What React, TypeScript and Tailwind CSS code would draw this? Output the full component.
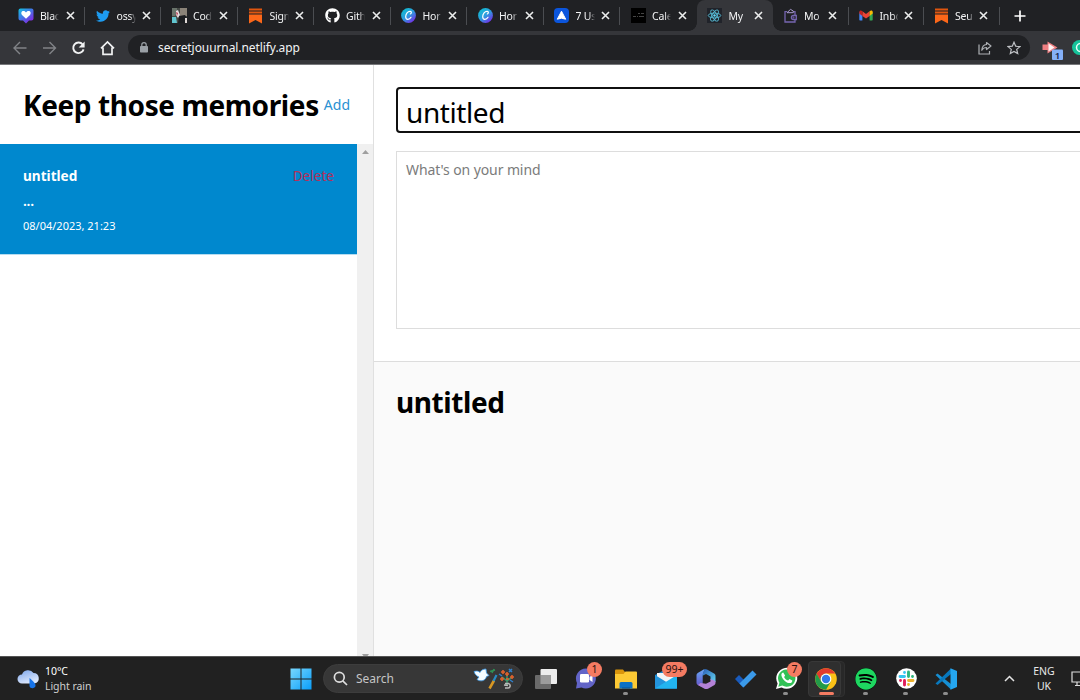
import type { ReactNode } from 'react';
import { FaTwitter, FaGithub, FaSpotify } from 'react-icons/fa';

function HeartIcon() {
  return (
    <svg width="16" height="16" viewBox="0 0 16 16">
      <defs>
        <linearGradient id="heart" x1="0" y1="0" x2="0.8" y2="1">
          <stop offset="0" stopColor="#10c4e0" />
          <stop offset="0.45" stopColor="#3f7be8" />
          <stop offset="1" stopColor="#8a1fe0" />
        </linearGradient>
      </defs>
      <path d="M2.500 0.500h11a2 2 0 0 1 2 2v8a2 2 0 0 1-2 2h-2.500L8 15.500 5 12.500H2.500a2 2 0 0 1-2-2v-8a2 2 0 0 1 2-2z" fill="url(#heart)" />
      <path d="M8 10.800L4 6.900C2.600 5.200 3.500 3 5.400 3 6.700 3 7.500 3.700 8 4.500 8.500 3.700 9.300 3 10.600 3c1.900 0 2.800 2.200 1.400 3.900z" fill="#fff" />
    </svg>
  );
}

function PhotoIcon() {
  return (
    <svg width="15" height="15" viewBox="0 0 15 15">
      <rect width="15" height="15" fill="#454945" />
      <path d="M0 0h5v5L3 8H0z" fill="#69736a" />
      <path d="M8 0h7v8H8z" fill="#8b8378" />
      <path d="M0 9h4l1 6H0z" fill="#61c5d0" />
      <path d="M4 3l2-1 2 5-2 3-2-3z" fill="#e6dcdf" />
      <path d="M4 4l2 1-1 3z" fill="#b83d50" />
      <path d="M7 8l6-1 2 3-1 5H6z" fill="#1b1d20" />
      <path d="M13 10h2v5h-2z" fill="#e0d9d6" />
    </svg>
  );
}

function SubstackIcon() {
  return (
    <svg width="15" height="16" viewBox="0 0 15 16">
      <path d="M1 1.500h13M1 4.500h13" stroke="#e0560f" strokeWidth="2" />
      <path d="M1 6.500h13v9L7.500 12 1 15.500z" fill="#fc6719" />
    </svg>
  );
}

function CanvaIcon({ id }: { id: string }) {
  return (
    <svg width="15" height="15" viewBox="0 0 15 15">
      <defs>
        <linearGradient id={id} x1="0" y1="0" x2="0.8" y2="1">
          <stop offset="0" stopColor="#08c5cd" />
          <stop offset="0.55" stopColor="#2e9bdf" />
          <stop offset="1" stopColor="#7a25e8" />
        </linearGradient>
      </defs>
      <circle cx="7.500" cy="7.500" r="7.400" fill={`url(#${id})`} />
      <path d="M9.300 6c1.300-.5 1.500-2.500 0-2.700C6.800 3 4.700 6 4.700 8.700c0 3.500 3.700 3.300 5.300.6" fill="none" stroke="#fff" strokeWidth="1.200" strokeLinecap="round" />
    </svg>
  );
}

function ArrowheadIcon() {
  return (
    <svg width="15" height="15" viewBox="0 0 15 15">
      <rect width="15" height="15" rx="4" fill="#0b55dc" />
      <path d="M7.500 3.200L11.700 11.200 7.500 10.200 3.300 11.200z" fill="#fff" stroke="#fff" strokeWidth="1" strokeLinejoin="round" />
    </svg>
  );
}

function BlackThumbIcon() {
  return (
    <svg width="15" height="15" viewBox="0 0 15 15">
      <rect width="15" height="15" fill="#000" />
      <path d="M7 5.500h2M10 5.500h3M2 8.500h3M6 8.500h1M8 8.500h5" stroke="#454545" strokeWidth="1" />
    </svg>
  );
}

function ReactIcon() {
  return (
    <svg width="15" height="15" viewBox="0 0 15 15">
      <rect width="15" height="15" fill="#20232a" />
      <g fill="none" stroke="#56b9d2" strokeWidth=".9">
        <ellipse cx="7.500" cy="7.500" rx="6.300" ry="2.400" />
        <ellipse cx="7.500" cy="7.500" rx="6.300" ry="2.400" transform="rotate(60 7.500 7.500)" />
        <ellipse cx="7.500" cy="7.500" rx="6.300" ry="2.400" transform="rotate(120 7.500 7.500)" />
      </g>
      <circle cx="7.500" cy="7.500" r="1.200" fill="#61dafb" />
    </svg>
  );
}

function WalletIcon() {
  return (
    <svg width="13" height="15" viewBox="0 0 13 15" fill="none" stroke="#7565b0" strokeWidth="1.300">
      <path d="M3 3.700H1v10.300h10V11.500M11 7.500V3.700H9.800" />
      <path d="M3 4.700l3.500-3.300L9.300 3v1.700z" stroke="#a99bcf" strokeWidth="1" />
      <path d="M12.300 7.500H9.400a2 2 0 0 0 0 4h2.900z" />
      <circle cx="9.500" cy="9.500" r=".3" />
    </svg>
  );
}

function GmailIcon() {
  return (
    <svg width="14" height="11" viewBox="0 0 14 11">
      <path d="M.3 2v7.500c0 .6.400 1 1 1H3.400V4z" fill="#4285f4" />
      <path d="M13.700 2v7.500c0 .6-.4 1-1 1h-2.100V4z" fill="#34a853" />
      <path d="M3.400 1.200v4.700L7 8.600l3.600-2.700V1.200L7 3.900z" fill="#ea4335" />
      <path d="M.3 2C.3.500 2 0 3.400 1.200v4.700L.3 3.600z" fill="#c5221f" />
      <path d="M13.700 2c0-1.500-1.700-2-3.100-.8v4.700l3.100-2.300z" fill="#fbbc04" />
    </svg>
  );
}

function CloseIcon() {
  return (
    <svg className="shrink-0" width="9" height="9" viewBox="0 0 9 9">
      <path d="M1 1l7 7M8 1L1 8" stroke="#eceded" strokeWidth="1.600" />
    </svg>
  );
}

type TabProps = { icon: ReactNode; title: string; active?: boolean; narrow?: boolean; beforeActive?: boolean };

function Tab({ icon, title, active, narrow, beforeActive }: TabProps) {
  return (
    <div className={`relative flex h-[31px] shrink-0 items-center ${narrow ? 'w-[75.500px] pl-[9px]' : 'w-[76.500px] pl-[10px]'} ${active ? 'rounded-t-[8px] bg-[#35363a]' : ''}`}>
      <div className="flex w-[16px] shrink-0 items-center justify-center">{icon}</div>
      <div className={`ml-[6px] shrink-0 whitespace-nowrap text-[10.500px] leading-[16px] tracking-[-0.200px] text-[#f3f4f5] [mask-image:linear-gradient(to_right,#000_13px,transparent_19px)] ${narrow ? 'w-[18px]' : 'w-[19px]'}`}>{title}</div>
      <div className={`flex ${narrow ? 'ml-[6px]' : 'ml-[6.500px]'}`}>
        <CloseIcon />
      </div>
      {!active && !beforeActive && <div className="absolute top-[7px] right-0 h-[18px] w-px bg-[#4b4d51]" />}
      {active && (
        <>
          <div className="absolute bottom-0 -left-[8px] size-[8px] bg-[radial-gradient(circle_at_0_0,transparent_7.500px,#35363a_8px)]" />
          <div className="absolute -right-[8px] bottom-0 size-[8px] bg-[radial-gradient(circle_at_100%_0,transparent_7.500px,#35363a_8px)]" />
        </>
      )}
    </div>
  );
}

function TabStrip() {
  return (
    <div className="flex h-[31px] bg-[#202124] pl-[8px]">
      <Tab icon={<HeartIcon />} title="Blac" />
      <Tab icon={<FaTwitter size={14} color="#1d9bf0" />} title="ossy" />
      <Tab icon={<PhotoIcon />} title="Cod" />
      <Tab icon={<SubstackIcon />} title="Sign" />
      <Tab icon={<FaGithub size={15} color="#fff" />} title="Gith" />
      <Tab icon={<CanvaIcon id="canva1" />} title="Hor" />
      <Tab icon={<CanvaIcon id="canva2" />} title="Hor" />
      <Tab icon={<ArrowheadIcon />} title="7 Us" />
      <Tab icon={<BlackThumbIcon />} title="Cale" beforeActive />
      <Tab icon={<ReactIcon />} title="My" active />
      <Tab icon={<WalletIcon />} title="Mo" narrow />
      <Tab icon={<GmailIcon />} title="Inbo" narrow />
      <Tab icon={<SubstackIcon />} title="Seu" narrow />
      <div className="flex items-center pl-[14px]">
        <svg width="12" height="12" viewBox="0 0 12 12">
          <path d="M6 .5v11M.5 6h11" stroke="#fff" strokeWidth="1.700" />
        </svg>
      </div>
    </div>
  );
}

function Toolbar() {
  return (
    <div className="flex h-[34px] items-center border-b border-[#77787b] bg-[#35363a] pl-[13px]">
      <svg width="103" height="16" viewBox="0 0 103 16" fill="none">
        <path d="M13.500 8H1.500M7 2L1 8l6 6" stroke="#818387" strokeWidth="1.400" />
        <path d="M30 8h12M36.500 2l6 6-6 6" stroke="#818387" strokeWidth="1.400" />
        <path d="M69.700 4.500A5.300 5.300 0 1 0 70.600 9.400" stroke="#f1f2f3" strokeWidth="1.900" />
        <path d="M71.600 1.500v6h-6z" fill="#f1f2f3" />
        <path d="M88 8.300L94.500 2l6.500 6.300M90 7.500v6.800h9V7.500" stroke="#f1f2f3" strokeWidth="1.700" />
      </svg>
      <div className="ml-[12px] flex h-[25px] w-[902px] shrink-0 items-center rounded-full bg-[#202124] pl-[12px]">
        <svg width="8" height="11" viewBox="0 0 8 11">
          <rect y="4" width="8" height="6.500" rx=".8" fill="#9aa0a6" />
          <path d="M1.800 4.500V2.800a2.200 2.200 0 0 1 4.400 0v1.700" stroke="#9aa0a6" strokeWidth="1.200" fill="none" />
        </svg>
        <span className="ml-[10px] text-[12px] tracking-[-0.080px] text-[#f2f3f4]">secretjouurnal.netlify.app</span>
        <svg className="mr-[15px] ml-auto" width="14" height="14" viewBox="0 0 14 14" fill="none" stroke="#adb0b4" strokeWidth="1.200">
          <path d="M1 3.500v9.500h10.500v-3" />
          <path d="M8.500 1.500L13 5 8.500 8.500V6.500C6.300 6.500 4.800 7.500 3.800 9.300 4 6 5.700 3.800 8.500 3.500z" strokeLinejoin="round" />
        </svg>
        <svg className="mr-[9px]" width="14" height="14" viewBox="0 0 14 14" fill="none" stroke="#bfc1c5" strokeWidth="1.200">
          <path d="M7 1.200l1.700 4 4.300.4-3.300 2.800 1 4.200L7 10.400l-3.700 2.200 1-4.200L1 5.600l4.300-.4z" />
        </svg>
      </div>
      <svg className="ml-[11px] shrink-0" width="39" height="26" viewBox="0 0 39 26">
        <path d="M1.500 9.500h5V6.500l10 6-10 6v-3.500h-5z" fill="#ef7f82" />
        <path d="M7.500 8.500l6 4-6 4z" fill="#fff3f3" />
        <rect x="11" y="14.500" width="11" height="10.500" rx="1" fill="#85b0f7" />
        <circle cx="38.500" cy="12.500" r="7.500" fill="#15c39a" />
        <circle cx="39.500" cy="12.500" r="4" fill="none" stroke="#e8fff8" strokeWidth="1.500" />
        <text x="16.500" y="23.500" textAnchor="middle" fontSize="9.500" fontWeight="600" fill="#14264a">1</text>
      </svg>
    </div>
  );
}

function Sidebar() {
  return (
    <aside className="flex w-[374px] shrink-0 flex-col border-r border-[#e0e0e0]">
      <header className="flex h-[79px] shrink-0 items-center justify-between pt-px pr-[23px] pl-[23px] whitespace-nowrap">
        <h1 className="w-[296px] text-[28px] leading-[40px] font-bold tracking-[-0.400px] text-black">Keep those memories</h1>
        <button className="text-[14px] leading-[20px] text-[#2a91d2]">Add</button>
      </header>
      <div className="flex grow">
        <div className="w-[357px]">
          <div className="h-[111px] border-b border-[#b5dcf0] bg-[#0088ce] px-[23px] pt-[22px] text-white">
            <div className="flex justify-between text-[13.600px] leading-[20px]">
              <strong>untitled</strong>
              <button className="text-[#b4305b]">Delete</button>
            </div>
            <p className="mt-[6px] text-[14px] leading-[18px] font-semibold tracking-[-0.300px]">...</p>
            <small className="mt-[8px] block text-[11px] leading-[16px]">08/04/2023, 21:23</small>
          </div>
        </div>
        <div className="flex w-[16px] flex-col items-center justify-between bg-[#f0f0f0] pt-[6px]">
          <svg width="7" height="4" viewBox="0 0 7 4"><path d="M0 4L3.500 0 7 4z" fill="#9f9f9f" /></svg>
          <svg width="7" height="2" viewBox="0 0 7 2"><path d="M0 0h7L5.500 2h-4z" fill="#9f9f9f" /></svg>
        </div>
      </div>
    </aside>
  );
}

function Editor() {
  return (
    <main className="flex min-w-0 grow flex-col">
      <section className="flex h-[296px] shrink-0 flex-col pt-[22px] pl-[22px]">
        <div className="flex h-[46px] w-[720px] items-center rounded-[4px] border-2 border-[#101010] pt-[4px] pl-[8px] text-[28px] leading-[40px] tracking-[-0.400px] text-black">untitled</div>
        <div className="mt-[18px] h-[178px] w-[720px] border border-[#dddddd] pt-[8px] pl-[9px] text-[14px] leading-[20px] tracking-[-0.100px] text-[#7b7b7b]">What's on your mind</div>
      </section>
      <section className="grow border-t border-[#dddddd] bg-[#fafafa] pt-[20px] pl-[22px]">
        <h1 className="text-[28px] leading-[40px] font-bold tracking-[-0.400px] text-black">untitled</h1>
      </section>
    </main>
  );
}

function Badge({ children }: { children: string }) {
  return <span className="absolute top-[5px] left-[26px] flex h-[15px] min-w-[15px] items-center justify-center rounded-full bg-[#f47b62] px-[3.500px] text-[10.500px] leading-[15px] text-[#2a1210]">{children}</span>;
}

function TaskItem({ children, badge, running, active }: { children: ReactNode; badge?: string; running?: boolean; active?: boolean }) {
  return (
    <div className="relative flex h-full w-[40px] shrink-0 items-center justify-center">
      {active && (
        <>
          <div className="absolute top-[4px] left-[6px] h-[36px] w-[33px] rounded-[4px] border border-[#303030] bg-[#282828]" />
          <div className="absolute top-[4px] left-[2px] h-[36px] w-[33px] rounded-[4px] border border-[#383838] bg-[#2f2f2f]" />
        </>
      )}
      <div className="relative flex">{children}</div>
      {badge && (badge.length > 1 ? <div className="absolute top-0 -left-[10px]"><Badge>{badge}</Badge></div> : <div className="absolute top-0 -left-[5px]"><Badge>{badge}</Badge></div>)}
      {running && !active && <div className="absolute bottom-[5px] left-[17px] h-[3px] w-[5px] rounded-full bg-[#8e8e8e]" />}
      {active && <div className="absolute bottom-[5px] left-[13px] h-[3px] w-[15px] rounded-full bg-[#f47b62]" />}
    </div>
  );
}

function WeatherIcon() {
  return (
    <svg width="23" height="20" viewBox="0 0 23 20">
      <defs>
        <linearGradient id="cloud" x1="0" y1="0" x2="0.500" y2="1">
          <stop offset="0" stopColor="#7ba5ec" />
          <stop offset="1" stopColor="#dce7fb" />
        </linearGradient>
      </defs>
      <path d="M5 14.500a4.500 4.500 0 0 1 0-9A6.500 6.500 0 0 1 16.500 4 5.300 5.300 0 0 1 17.500 14.500z" fill="url(#cloud)" />
      <path d="M12.500 9c3.500 3 6.500 5.500 6 8-.5 2.800-5.500 3-6 0z" fill="#1673e8" />
    </svg>
  );
}

function WindowsIcon() {
  return (
    <svg width="22" height="22" viewBox="0 0 22 22">
      <defs>
        <linearGradient id="win" gradientUnits="userSpaceOnUse" x1="0" y1="0" x2="22" y2="22">
          <stop offset="0" stopColor="#7bd9ff" />
          <stop offset="1" stopColor="#079cf8" />
        </linearGradient>
      </defs>
      <path d="M.5 .5h10v10H.5zM11.500 .5h10v10h-10zM.5 11.500h10v10H.5zM11.500 11.500h10v10h-10z" fill="url(#win)" />
    </svg>
  );
}

function SearchArt() {
  return (
    <svg width="42" height="24" viewBox="0 0 42 24">
      <path d="M1 4.500c3.500-1 5 0 6 1 1-2.500 3.500-3.500 6-3.500l.5 4 2.500 2.500-2.500 1c-1 4.500-6 5.500-9.500 3l2-2.500C3.500 9 2 7.500 1 4.500z" fill="#f4fbff" stroke="#3e9be8" strokeWidth=".8" />
      <path d="M17 4.500l5-1.500M19 6l2-4" stroke="#2f8f55" strokeWidth="1.500" />
      <path d="M16.500 21.500l4.500-8" stroke="#d79723" strokeWidth="2.600" />
      <path d="M20.500 14l3-6" stroke="#298cc5" strokeWidth="2.200" />
      <path d="M34 18V7M34 14l-5-4M34 14l5-4" stroke="#3b9b6b" strokeWidth="1.500" />
      <g fill="none" stroke="#e0622d" strokeWidth="1.600">
        <path d="M30 3v4M28 5h4M29 10v4M27 12h4M39 8v4M37 10h4M34 5v4M32 7h4M33 12h3" />
      </g>
      <path d="M36 2l3 3M39 2l-3 3M26 7l3 2M37 13l3 2" stroke="#3080cc" strokeWidth="1.500" />
      <path d="M32 16.500h3.500c2.500 1 2 4.500-.5 4.500h-3M31 18l4 .5" fill="none" stroke="#b9b9b9" strokeWidth="1.500" />
    </svg>
  );
}

function TaskViewIcon() {
  return (
    <svg width="22" height="20" viewBox="0 0 22 20">
      <rect x="5.500" y="0" width="16.500" height="15" rx="1" fill="#ededed" />
      <rect x="0" y="6" width="16" height="14" rx="1" fill="#6a6a6a" />
      <rect x="5.500" y="6" width="10.500" height="9" fill="#9c9c9c" />
    </svg>
  );
}

function ChatIcon() {
  return (
    <svg width="22" height="21" viewBox="0 0 22 21">
      <path d="M11 .5a10 10 0 1 1-4.500 19L1 20.500 2 15A10 10 0 0 1 11 .5z" fill="#6264c7" />
      <rect x="5" y="6" width="9" height="8.500" rx="1.300" fill="#fff" />
      <path d="M14.500 9l3-2v7l-3-2z" fill="#fff" />
    </svg>
  );
}

function FolderIcon() {
  return (
    <svg width="22" height="20" viewBox="0 0 22 20">
      <path d="M0 1.500Q0 .5 1 .5h7l2 2.500v3H0z" fill="#d9950c" />
      <path d="M0 5h8.500l2-2.500H21q1 0 1 1v16H0z" fill="#fcc934" />
      <path d="M4.500 19.500v-5Q4.500 13 6 13h10q1.500 0 1.500 1.500v5z" fill="#0b70c4" />
      <path d="M7 19.500v-1h8v1z" fill="#084f91" />
    </svg>
  );
}

function MailIcon() {
  return (
    <svg width="22" height="20" viewBox="0 0 22 20">
      <path d="M0 6L11 0l11 6v13.500H0z" fill="#1482c8" />
      <path d="M2 4h18v9H2z" fill="#f3f5f7" />
      <path d="M0 6l22 13.500H0z" fill="#2494dc" />
      <path d="M22 6L0 19.500h22z" fill="#22b4f0" />
    </svg>
  );
}

function M365Icon() {
  return (
    <svg width="20" height="20" viewBox="0 0 20 20">
      <defs>
        <linearGradient id="m1" x1="0" y1="0" x2="0" y2="1">
          <stop offset="0" stopColor="#67a8f5" />
          <stop offset="1" stopColor="#6550c6" />
        </linearGradient>
        <linearGradient id="m2" x1="0" y1="0" x2="1" y2="1">
          <stop offset="0" stopColor="#285cb7" />
          <stop offset="1" stopColor="#65d6f1" />
        </linearGradient>
      </defs>
      <path d="M8.500 0L1.700 4Q.5 5 .5 6v8q0 1.200 1.200 2l5 2.500V7z" fill="url(#m1)" />
      <path d="M8.500 0Q10 0 11 .5l7.500 4.300q1 1 1 2V13l-5-2V7.500L10 5 6 7z" fill="url(#m2)" />
      <path d="M4.500 14l5.500.8 4.500-2.300V10l5 2v2q0 1.200-1 2L12 19.700q-2 .6-3.500 0L2 16z" fill="#b482d7" />
    </svg>
  );
}

function TodoIcon() {
  return (
    <svg width="22" height="18" viewBox="0 0 22 18">
      <path d="M0 9l4-4 8 8-4 4.500z" fill="#195bbd" />
      <path d="M4.500 13.500L17.500 .5l4 4L8.500 17.500z" fill="#3b9ae9" />
    </svg>
  );
}

function WhatsAppIcon() {
  return (
    <svg width="23" height="23" viewBox="0 0 23 23">
      <path d="M1 22l1.600-5.600A10.500 10.500 0 1 1 6.600 20.400z" fill="#fff" />
      <path d="M3.300 19.700l1.100-3.900A8.700 8.700 0 1 1 7.300 18.600z" fill="#32c156" />
      <path d="M8.200 5.500c-1.900.5-2.200 2.400-1.400 4.200 1.400 3.400 4.800 6.400 7.900 6.400 1.500 0 2.700-1 2.600-2.600l-2.800-1.400-1.400 1.500c-2-.8-3.100-2-4-3.700l1-1.300z" fill="#fff" />
    </svg>
  );
}

function ChromeIcon() {
  return (
    <svg width="22" height="22" viewBox="0 0 22 22">
      <circle cx="11" cy="11" r="10.800" fill="#fbc116" />
      <path d="M1.650 5.600A10.800 10.800 0 0 0 11 21.800L15.700 13.700 11 11 6.300 13.700z" fill="#229b4a" />
      <path d="M1.650 5.600L6.300 13.700 11 11V5.600z" fill="#229b4a" />
      <path d="M1.650 5.600A10.800 10.800 0 0 1 20.350 5.600H11A5.400 5.400 0 0 0 5.600 12.400z" fill="#e33b2e" />
      <circle cx="11" cy="11" r="5.400" fill="#fff" />
      <circle cx="11" cy="11" r="4.200" fill="#3279ea" />
    </svg>
  );
}

function SlackIcon() {
  return (
    <svg width="21" height="21" viewBox="0 0 21 21">
      <circle cx="10.500" cy="10.500" r="10.300" fill="#fff" />
      <g strokeWidth="2.900" strokeLinecap="round">
        <path d="M8.500 4.500v0M4 8.500h4.500" stroke="#36c5f0" />
        <path d="M12.500 4v4.500M16.500 8.500v0" stroke="#2eb67d" />
        <path d="M12.500 12.500H17M12.500 16.500v0" stroke="#ecb22e" />
        <path d="M8.500 12.500V17M4.500 12.500v0" stroke="#e01e5a" />
      </g>
    </svg>
  );
}

function CodeIcon() {
  return (
    <svg width="22" height="22" viewBox="0 0 22 22">
      <path d="M.5 7l2-1.500L16 16v5.500z" fill="#168fd3" />
      <path d="M.5 15.500l2 1.500L16 6V.5z" fill="#0878bd" />
      <path d="M15.500 .2L22 3v16l-6.500 2.800V.2z" fill="#25a7f1" />
    </svg>
  );
}

function Taskbar() {
  return (
    <footer className="flex h-[44px] shrink-0 items-center overflow-hidden border-t border-[#545454] bg-[#212121] text-[#e8e8e8]">
      <div className="flex w-[281px] shrink-0 items-center pl-[17px]">
        <WeatherIcon />
        <div className="ml-[5px] text-[10.500px] leading-[14.500px] tracking-[-0.050px]">
          <div className="text-white">10°C</div>
          <div className="text-[#cfcfcf]">Light rain</div>
        </div>
      </div>
      <TaskItem><WindowsIcon /></TaskItem>
      <div className="ml-[2px] flex h-[29px] w-[200px] shrink-0 items-center rounded-full border border-[#3d3d3d] bg-[#373737] pr-[7px] pl-[9px]">
        <svg width="15" height="15" viewBox="0 0 15 15" fill="none" stroke="#dedede" strokeWidth="1.700">
          <circle cx="6.300" cy="6.300" r="4.900" />
          <path d="M9.800 9.800l4.200 4.200" />
        </svg>
        <span className="ml-[8px] text-[12px] text-[#c5c5c5]">Search</span>
        <div className="ml-auto"><SearchArt /></div>
      </div>
      <div className="ml-[3px] flex h-full">
        <TaskItem><TaskViewIcon /></TaskItem>
        <TaskItem badge="1"><ChatIcon /></TaskItem>
        <TaskItem running><FolderIcon /></TaskItem>
        <TaskItem badge="99+"><MailIcon /></TaskItem>
        <TaskItem><M365Icon /></TaskItem>
        <TaskItem><TodoIcon /></TaskItem>
        <TaskItem badge="7" running><WhatsAppIcon /></TaskItem>
        <TaskItem active><ChromeIcon /></TaskItem>
        <TaskItem running><div className="rounded-full bg-black"><FaSpotify size={22} color="#1ed760" /></div></TaskItem>
        <TaskItem running><SlackIcon /></TaskItem>
        <TaskItem running><CodeIcon /></TaskItem>
      </div>
      <svg className="ml-[38px] shrink-0" width="11" height="7" viewBox="0 0 11 7"><path d="M1 6l4.500-4.500L10 6" fill="none" stroke="#e4e4e4" strokeWidth="1.500" /></svg>
      <div className="ml-[14px] w-[30px] shrink-0 text-center text-[10.500px] leading-[14.500px]">
        <div>ENG</div>
        <div>UK</div>
      </div>
      <svg className="ml-[12px] shrink-0" width="18" height="16" viewBox="0 0 18 16" fill="none" stroke="#dcdcdc" strokeWidth="1.200">
        <path d="M1 1h16v10H1zM6 11v3M4 14.500h8" />
      </svg>
    </footer>
  );
}

export default function App() {
  return (
    <div className="flex h-[700px] w-[1080px] flex-col overflow-hidden bg-white font-['Noto_Sans','Open_Sans',sans-serif]">
      <TabStrip />
      <Toolbar />
      <div className="flex min-h-0 grow">
        <Sidebar />
        <Editor />
      </div>
      <Taskbar />
    </div>
  );
}
